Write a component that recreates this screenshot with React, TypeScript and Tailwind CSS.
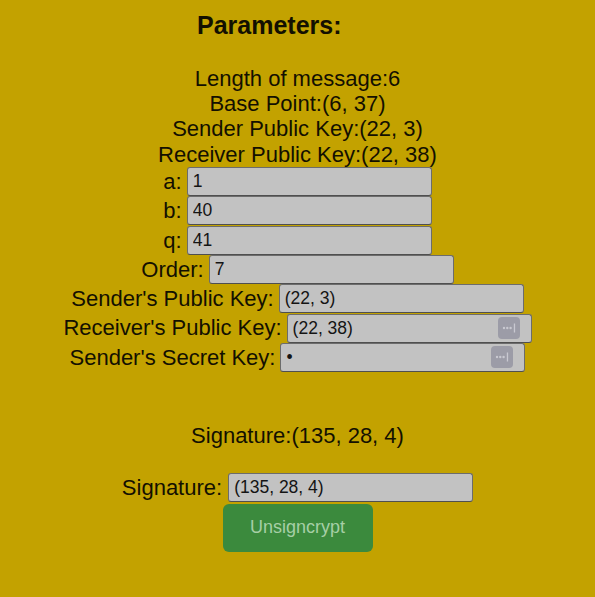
import React, { useState } from "react";

interface FieldRowProps {
  label: string;
  value: string;
  secret?: boolean;
  manager?: boolean;
}

const KeyIcon: React.FC = () => (
  <div className="absolute right-[12px] top-1/2 -translate-y-1/2 w-[22px] h-[22px] rounded-[4px] bg-[#9c9ca7] flex items-center justify-center">
    <svg width="16" height="12" viewBox="0 0 16 12">
      <circle cx="3" cy="6" r="1.2" fill="#c9c9d1" />
      <circle cx="6.3" cy="6" r="1.2" fill="#c9c9d1" />
      <circle cx="9.6" cy="6" r="1.2" fill="#c9c9d1" />
      <rect x="12.8" y="1.5" width="1.3" height="9" fill="#c9c9d1" />
    </svg>
  </div>
);

const inputCls =
  "w-[245px] h-[29px] px-[5px] bg-[#c2c2c2] border border-[#6c6c6c] border-b-[#4f4f4f] rounded-[3px] text-[17.5px] text-[#141414] focus:outline-none";

const FieldRow: React.FC<FieldRowProps> = ({ label, value, secret, manager }) => {
  const [text, setText] = useState<string>(value);
  return (
    <div className="flex items-center justify-center h-[29.3px]">
      <span className="mr-[5px] whitespace-nowrap">{label}</span>
      <div className="relative">
        <input
          type={secret ? "password" : "text"}
          value={text}
          onChange={(e) => setText(e.target.value)}
          className={inputCls}
        />
        {manager && <KeyIcon />}
      </div>
    </div>
  );
};

const App: React.FC = () => {
  const [sig, setSig] = useState<string>("(135, 28, 4)");

  return (
    <div className="min-h-[597px] w-full bg-[#c3a200] text-[#131000] font-['Liberation_Sans',Arial,sans-serif] leading-[1.15] flex flex-col items-center">
      <h2 className="self-start ml-[197px] mt-[11px] text-[25px] font-bold">
        Parameters:
      </h2>

      <div className="mt-[26px] flex flex-col items-center text-[22px]">
        <p>Length of message:6</p>
        <p>Base Point:(6, 37)</p>
        <p>Sender Public Key:(22, 3)</p>
        <p>Receiver Public Key:(22, 38)</p>

        <FieldRow label="a:" value="1" />
        <FieldRow label="b:" value="40" />
        <FieldRow label="q:" value="41" />
        <FieldRow label="Order:" value="7" />
        <FieldRow label="Sender's Public Key:" value="(22, 3)" />
        <FieldRow label="Receiver's Public Key:" value="(22, 38)" manager />
        <FieldRow label="Sender's Secret Key:" value="1" secret manager />

        <p className="mt-[51px]">Signature:(135, 28, 4)</p>

        <div className="mt-[25px] flex items-center justify-center h-[29.3px]">
          <span className="mr-[6px]">Signature:</span>
          <input
            type="text"
            value={sig}
            onChange={(e) => setSig(e.target.value)}
            className={inputCls}
          />
        </div>

        <button className="mt-[1px] w-[150px] h-[48px] rounded-[6px] bg-[#3b8a3d] text-[#a6cfa6] text-[18px]">
          Unsigncrypt
        </button>
      </div>
    </div>
  );
};

export default App;
